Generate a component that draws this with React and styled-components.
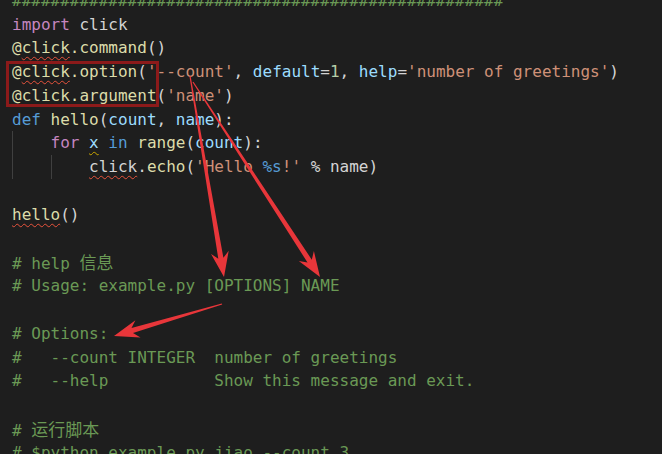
import React from "react";
import styled, { createGlobalStyle } from "styled-components";

const GlobalStyle = createGlobalStyle`
  html, body {
    margin: 0;
    padding: 0;
    background: #1e1e1e;
  }
`;

const colors = {
  plain: "#d4d4d4",
  kw: "#c586c0",
  storage: "#569cd6",
  fn: "#dcdcaa",
  param: "#9cdcfe",
  str: "#ce9178",
  num: "#b5cea8",
  comment: "#6a9955",
};

const Editor = styled.div`
  position: relative;
  width: 662px;
  height: 454px;
  overflow: hidden;
  background: #1e1e1e;
`;

const Code = styled.div`
  margin-top: -11.3px;
  padding-left: 12px;
  font-family: "DejaVu Sans Mono", "Liberation Mono", "Noto Sans CJK SC", monospace;
  font-size: 16px;
  color: ${colors.plain};
`;

const Line = styled.div`
  height: 23.8px;
  line-height: 23.8px;
  white-space: pre;
`;

const Token = styled.span`
  color: ${(p) => colors[p.$c] || colors.plain};
  text-decoration: ${(p) => (p.$sq ? "underline wavy" : "none")};
  text-decoration-color: ${(p) => (p.$sq === "warn" ? "#cca700" : "#e8533c")};
  text-decoration-thickness: 1px;
  text-underline-offset: 3px;
`;

const Cjk = styled.span`
  font-family: "Noto Sans CJK SC", sans-serif;
  font-size: 17px;
  color: ${colors.comment};
`;

const Indent = styled.span`
  display: inline-block;
  box-sizing: border-box;
  width: 4ch;
  height: 23.8px;
  vertical-align: top;
  border-left: 1px solid #404040;
`;

const MarkBox = styled.div`
  position: absolute;
  left: 6px;
  top: 61px;
  width: 153px;
  height: 46px;
  box-sizing: border-box;
  border: 3px solid #8c1a1a;
`;

const Overlay = styled.svg`
  position: absolute;
  left: 0;
  top: 0;
  pointer-events: none;
`;

const t = (text, c, sq) => ({ text, c, sq });

const lines = [
  { tokens: [t("#".repeat(51), "comment")] },
  { tokens: [t("import", "kw"), t(" click")] },
  { tokens: [t("@", "fn"), t("click", "fn", "error"), t(".command", "fn"), t("()")] },
  {
    tokens: [
      t("@", "fn"), t("click", "fn", "error"), t(".option", "fn"), t("("),
      t("'--count'", "str"), t(", "), t("default", "param"), t("="), t("1", "num"),
      t(", "), t("help", "param"), t("="), t("'number of greetings'", "str"), t(")"),
    ],
  },
  { tokens: [t("@", "fn"), t("click", "fn"), t(".argument", "fn"), t("("), t("'name'", "str"), t(")")] },
  {
    tokens: [
      t("def", "storage"), t(" "), t("hello", "fn"), t("("), t("count", "param"),
      t(", "), t("name", "param"), t("):"),
    ],
  },
  {
    indent: 1,
    tokens: [
      t("for", "kw"), t(" "), t("x", "param", "warn"), t(" "), t("in", "storage"), t(" "),
      t("range", "fn"), t("("), t("count", "param"), t("):"),
    ],
  },
  {
    indent: 2,
    tokens: [
      t("click", "plain", "error"), t("."), t("echo", "fn"), t("("), t("'Hello ", "str"),
      t("%s", "storage"), t("!'", "str"), t(" % name)"),
    ],
  },
  { tokens: [] },
  { tokens: [t("hello", "fn", "error"), t("()")] },
  { tokens: [] },
  { tokens: [t("# help ", "comment")], cjk: "信息" },
  { tokens: [t("# Usage: example.py [OPTIONS] NAME", "comment")] },
  { tokens: [] },
  { tokens: [t("# Options:", "comment")] },
  { tokens: [t("#   --count INTEGER  number of greetings", "comment")] },
  { tokens: [t("#   --help           Show this message and exit.", "comment")] },
  { tokens: [] },
  { tokens: [t("# ", "comment")], cjk: "运行脚本" },
  { tokens: [t("# $python example.py jiao --count 3", "comment")] },
];

const arrows = [
  { from: [190, 76], to: [224, 277] },
  { from: [193, 82], to: [320, 277] },
  { from: [222, 304], to: [114, 336] },
];

// tapered shaft with a swept-back head, like a screenshot-tool arrow
const arrowPoints = ([sx, sy], [tx, ty]) => {
  const dx = tx - sx;
  const dy = ty - sy;
  const len = Math.hypot(dx, dy);
  const ux = dx / len;
  const uy = dy / len;
  const nx = -uy;
  const ny = ux;
  const at = (d, w) => [tx - ux * d + nx * w, ty - uy * d + ny * w];
  const pts = [
    [sx + nx * 0.6, sy + ny * 0.6],
    at(19, 2.6),
    at(25, 9),
    [tx, ty],
    at(25, -9),
    at(19, -2.6),
    [sx - nx * 0.6, sy - ny * 0.6],
  ];
  return pts.map((p) => p.map((v) => v.toFixed(1)).join(",")).join(" ");
};

const App = () => {
  return (
    <Editor>
      <GlobalStyle />
      <Code>
        {lines.map((line, i) => (
          <Line key={i}>
            {Array.from({ length: line.indent || 0 }).map((_, k) => (
              <Indent key={k} />
            ))}
            {line.tokens.map((tok, k) => (
              <Token key={k} $c={tok.c} $sq={tok.sq}>
                {tok.text}
              </Token>
            ))}
            {line.cjk && <Cjk>{line.cjk}</Cjk>}
          </Line>
        ))}
      </Code>
      <MarkBox />
      <Overlay width="662" height="454" viewBox="0 0 662 454">
        {arrows.map((a, i) => (
          <polygon key={i} points={arrowPoints(a.from, a.to)} fill="#e8363a" />
        ))}
      </Overlay>
    </Editor>
  );
};

export default App;
